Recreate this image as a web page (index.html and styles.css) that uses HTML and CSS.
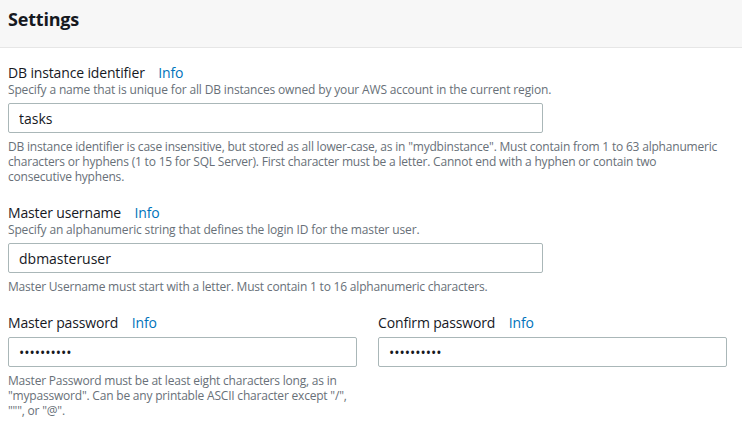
FILE: index.html
```html
<!DOCTYPE html>
<html>
<head>
<meta charset="utf-8">
<link rel="stylesheet" href="styles.css">
</head>
<body>
<div class="panel">
  <div class="panel-header"><h2>Settings</h2></div>
  <div class="panel-body">
    <div class="field">
      <div class="label">DB instance identifier <a class="info">Info</a></div>
      <div class="desc">Specify a name that is unique for all DB instances owned by your AWS account in the current region.</div>
      <input class="input wide" type="text" value="tasks">
      <div class="help">DB instance identifier is case insensitive, but stored as all lower-case, as in "mydbinstance". Must contain from 1 to 63 alphanumeric<br>characters or hyphens (1 to 15 for SQL Server). First character must be a letter. Cannot end with a hyphen or contain two<br>consecutive hyphens.</div>
    </div>
    <div class="field">
      <div class="label">Master username <a class="info">Info</a></div>
      <div class="desc">Specify an alphanumeric string that defines the login ID for the master user.</div>
      <input class="input wide" type="text" value="dbmasteruser">
      <div class="help">Master Username must start with a letter. Must contain 1 to 16 alphanumeric characters.</div>
    </div>
    <div class="pw-grid">
      <div class="field">
        <div class="label">Master password <a class="info">Info</a></div>
        <input class="input" type="password" value="mypassword">
        <div class="help">Master Password must be at least eight characters long, as in<br>"mypassword". Can be any printable ASCII character except "/",<br>""", or "@".</div>
      </div>
      <div class="field">
        <div class="label">Confirm password <a class="info">Info</a></div>
        <input class="input" type="password" value="mypassword">
      </div>
    </div>
  </div>
</div>
</body>
</html>
```
FILE: styles.css
```css
* { box-sizing: border-box; }
body {
  margin: 0;
  background: #fff;
  font-family: "Open Sans", "Liberation Sans", sans-serif;
  color: #16191f;
}
.panel-header {
  height: 48px;
  background: #f7f7f7;
  border-bottom: 1px solid #e6e6e6;
  display: flex;
  align-items: center;
  padding-left: 8px;
  padding-bottom: 10px;
}
.panel-header h2 {
  margin: 0;
  font-size: 18px;
  font-weight: 700;
  letter-spacing: -0.2px;
  color: #16191f;
}
.panel-body {
  padding: 16px 15px 0 8px;
}
.field { margin-bottom: 20px; }
.label {
  font-size: 14px;
  line-height: 18px;
  letter-spacing: -0.15px;
  color: #16191f;
}
.info {
  color: #0073bb;
  margin-left: 10px;
}
.desc {
  font-size: 12px;
  line-height: 16px;
  letter-spacing: -0.15px;
  color: #687078;
}
.input {
  display: block;
  width: 100%;
  height: 30px;
  margin-top: 5px;
  border: 1px solid #aab7b8;
  border-radius: 2px;
  padding: 0 10px;
  font-family: inherit;
  font-size: 14px;
  color: #16191f;
  outline: none;
}
.input.wide { width: 535px; }
.help {
  margin-top: 6px;
  font-size: 12px;
  line-height: 15px;
  letter-spacing: -0.2px;
  white-space: nowrap;
  color: #687078;
}
.pw-grid {
  display: grid;
  grid-template-columns: 1fr 1fr;
  column-gap: 21px;
}
```
